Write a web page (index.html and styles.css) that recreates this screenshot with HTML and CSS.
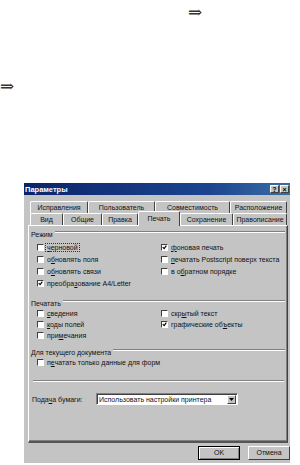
FILE: index.html
```html
<!DOCTYPE html>
<html lang="ru">
<head>
    <meta charset="UTF-8">
    <title>Параметры</title>
    <link rel="stylesheet" href="styles.css">
</head>
<body>
<div class="page">
    <p class="line line-top"><span class="arrow">&rArr;</span></p>
    <p class="line line-mid"><span class="arrow">&rArr;</span></p>

    <div class="dialog">
        <div class="titlebar">
            <span class="title">Параметры</span>
            <span class="tb-btn">?</span>
            <span class="tb-btn">&times;</span>
        </div>

        <div class="tabs">
            <div class="tab-row back">
                <div class="tab" style="width:58px">Исправления</div>
                <div class="tab" style="width:67px">Пользователь</div>
                <div class="tab" style="width:75px">Совместимость</div>
                <div class="tab" style="width:57px">Расположение</div>
            </div>
            <div class="tab-row front">
                <div class="tab" style="width:33px">Вид</div>
                <div class="tab" style="width:39px">Общие</div>
                <div class="tab" style="width:36px">Правка</div>
                <div class="tab active" style="width:42px">Печать</div>
                <div class="tab" style="width:53px">Сохранение</div>
                <div class="tab" style="width:54px">Правописание</div>
            </div>
        </div>

        <div class="sheet">
            <div class="group-label">Режим</div>
            <div class="cols">
                <div class="col">
                    <div class="row"><span class="box"></span><span class="focus"><u>ч</u>ерновой</span></div>
                    <div class="row"><span class="box"></span>о<u>б</u>новлять поля</div>
                    <div class="row"><span class="box"></span>о<u>б</u>новлять связи</div>
                    <div class="row"><span class="box checked"><svg viewBox="0 0 7 7"><polyline points="1,3 3,5 6,1"/></svg></span>преобра<u>з</u>ование A4/Letter</div>
                </div>
                <div class="col">
                    <div class="row"><span class="box checked"><svg viewBox="0 0 7 7"><polyline points="1,3 3,5 6,1"/></svg></span><u>ф</u>оновая печать</div>
                    <div class="row"><span class="box"></span><u>п</u>ечатать Postscript поверх текста</div>
                    <div class="row"><span class="box"></span>в о<u>б</u>ратном порядке</div>
                </div>
            </div>

            <div class="group-label gap-print">Печатать</div>
            <div class="cols tight">
                <div class="col">
                    <div class="row"><span class="box"></span><u>с</u>ведения</div>
                    <div class="row"><span class="box"></span><u>к</u>оды полей</div>
                    <div class="row"><span class="box"></span>при<u>м</u>ечания</div>
                </div>
                <div class="col">
                    <div class="row"><span class="box"></span>скр<u>ы</u>тый текст</div>
                    <div class="row"><span class="box checked"><svg viewBox="0 0 7 7"><polyline points="1,3 3,5 6,1"/></svg></span>графические об<u>ъ</u>екты</div>
                </div>
            </div>

            <div class="group-label gap-doc">Для текущего документа</div>
            <div class="cols tight">
                <div class="col">
                    <div class="row"><span class="box"></span>п<u>е</u>чатать только данные для форм</div>
                </div>
            </div>

            <div class="separator"></div>

            <div class="feed">
                <span class="feed-label">Пода<u>ч</u>а бумаги:</span>
                <div class="select">
                    <span class="select-text">Использовать настройки принтера</span>
                    <span class="select-btn"><svg viewBox="0 0 5 3"><polygon points="0,0 5,0 2.5,3"/></svg></span>
                </div>
            </div>
        </div>

        <div class="buttons">
            <div class="btn default">OK</div>
            <div class="btn">Отмена</div>
        </div>
    </div>
</div>
</body>
</html>
```

FILE: styles.css
```css
body {
    margin: 0;
    padding: 0;
    background: #fff;
    font-family: "Liberation Sans", Arial, sans-serif;
}
.page {
    width: 300px;
    height: 465px;
    padding-top: 5px;
    box-sizing: border-box;
    overflow: hidden;
}
.line {
    margin: 0;
    height: 14px;
    line-height: 14px;
}
.line-top {
    padding-left: 188px;
    margin-bottom: 60px;
}
.arrow {
    font-family: "DejaVu Serif", serif;
    font-size: 17px;
    color: #333;
}

/* dialog window */
.dialog {
    margin: 90px 0 0 24px;
    width: 266px;
    height: 280px;
    background: #c4c4c4;
    font-size: 7px;
    color: #111;
}
.titlebar {
    display: flex;
    align-items: center;
    height: 12px;
    padding: 0 1px 0 1px;
    background: linear-gradient(to right, #0a246a, #1c4590 70%, #3a6ea5);
    color: #fff;
}
.title {
    flex-grow: 1;
    font-weight: bold;
    font-size: 7.5px;
}
.tb-btn {
    width: 9px;
    height: 8px;
    margin-left: 1px;
    background: #c4c4c4;
    color: #000;
    font-weight: bold;
    font-size: 7px;
    line-height: 8px;
    text-align: center;
    box-sizing: border-box;
    border: 1px solid;
    border-color: #fff #404040 #404040 #fff;
}

/* tabs */
.tabs {
    margin-top: 6px;
    padding-left: 6px;
}
.tab-row {
    display: flex;
    height: 12px;
}
.tab {
    height: 12px;
    line-height: 11px;
    text-align: center;
    box-sizing: border-box;
    border: 1px solid;
    border-bottom: none;
    border-color: #fff #404040 #fff #fff;
    border-radius: 2px 2px 0 0;
    background: #c4c4c4;
    white-space: nowrap;
}
.tab.active {
    height: 15px;
    margin-top: -2px;
    line-height: 13px;
    z-index: 2;
}

/* tab sheet */
.sheet {
    height: 218px;
    margin: 0 2px 0 4px;
    padding: 2px 2px 0 2px;
    box-sizing: border-box;
    border: 1px solid;
    border-color: #fff #404040 #555 #fff;
    border-bottom-width: 2px;
    box-shadow: inset -1px -1px 0 #808080;
}
.group-label {
    display: flex;
    align-items: center;
    height: 10px;
    margin-top: 1px;
    white-space: nowrap;
}
.group-label::after {
    content: "";
    flex-grow: 1;
    margin-left: 2px;
    border-top: 1px solid #808080;
    border-bottom: 1px solid #fff;
    position: relative;
    top: -2px;
}
.gap-print {
    margin-top: 9px;
}
.gap-doc {
    margin-top: 6px;
}
.cols {
    display: grid;
    grid-template-columns: 124px 1fr;
    padding-left: 6px;
    margin-top: 2px;
}
.cols.tight {
    margin-top: 0;
}
.row {
    display: flex;
    align-items: center;
    height: 12px;
    white-space: nowrap;
}
.tight .row {
    height: 11px;
}
.box {
    width: 7px;
    height: 7px;
    margin-right: 3px;
    box-sizing: border-box;
    border: 1px solid;
    border-color: #404040 #fff #fff #404040;
    background: #fff;
    flex-shrink: 0;
}
.box svg {
    display: block;
    width: 5px;
    height: 5px;
}
.box polyline {
    fill: none;
    stroke: #000;
    stroke-width: 1.6;
}
.focus {
    outline: 1px dotted #333;
    padding: 0 1px;
    margin-left: -1px;
}
u {
    text-decoration-thickness: 1px;
    text-underline-offset: 1px;
}
.separator {
    margin: 12px 1px 0 2px;
    border-top: 1px solid #808080;
    border-bottom: 1px solid #fff;
}
.feed {
    display: flex;
    align-items: center;
    margin-top: 11px;
    padding-left: 1px;
}
.feed-label {
    width: 64px;
}
.select {
    display: flex;
    align-items: center;
    width: 142px;
    height: 12px;
    box-sizing: border-box;
    border: 1px solid;
    border-color: #808080 #fff #fff #808080;
    box-shadow: inset 1px 1px 0 #404040;
    background: #fff;
}
.select-text {
    flex-grow: 1;
    padding-left: 2px;
    white-space: nowrap;
}
.select-btn {
    display: flex;
    align-items: center;
    justify-content: center;
    width: 9px;
    height: 9px;
    margin-right: 1px;
    box-sizing: border-box;
    background: #c4c4c4;
    border: 1px solid;
    border-color: #fff #404040 #404040 #fff;
}
.select-btn svg {
    width: 5px;
    height: 3px;
}

/* buttons */
.buttons {
    display: flex;
    justify-content: flex-end;
    gap: 8px;
    margin-top: 3px;
}
.btn {
    width: 42px;
    height: 14px;
    line-height: 12px;
    text-align: center;
    box-sizing: border-box;
    border: 1px solid;
    border-color: #fff #404040 #404040 #fff;
}
.btn.default {
    border: 1px solid #000;
    box-shadow: inset 1px 1px 0 #fff, inset -1px -1px 0 #808080;
}
```
